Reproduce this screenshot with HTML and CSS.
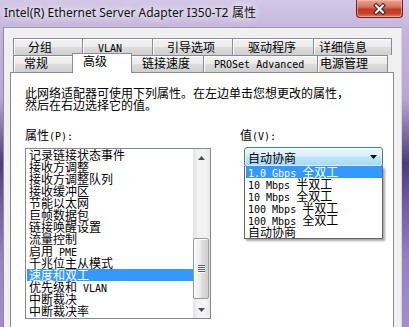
FILE: index.html
```html
<!DOCTYPE html>
<html lang="zh-CN">
<head>
  <meta charset="UTF-8" />
  <title>Intel(R) Ethernet Server Adapter I350-T2 属性</title>
  <link rel="stylesheet" href="styles.css">
</head>
<body>
  <div class="titlebar">
    <span class="title">Intel(R) Ethernet Server Adapter I350-T2 属性</span>
    <span class="close-btn">
      <svg width="15" height="12" viewBox="0 0 15 12">
        <path d="M4 2.5 L11 9.5 M11 2.5 L4 9.5" stroke="#3a2424" stroke-width="4" stroke-linecap="square" fill="none"/>
        <path d="M4 2.5 L11 9.5 M11 2.5 L4 9.5" stroke="#fff" stroke-width="2" stroke-linecap="square" fill="none"/>
      </svg>
    </span>
  </div>

  <div class="dialog">
    <div class="tabs">
      <div class="tab-row row-top">
        <div class="tab">分组</div>
        <div class="tab"><span class="en">VLAN</span></div>
        <div class="tab">引导选项</div>
        <div class="tab">驱动程序</div>
        <div class="tab">详细信息</div>
      </div>
      <div class="tab-row row-bottom">
        <div class="tab">常规</div>
        <div class="tab active">高级</div>
        <div class="tab">链接速度</div>
        <div class="tab"><span class="en">PROSet Advanced</span></div>
        <div class="tab">电源管理</div>
      </div>
    </div>

    <div class="panel">
      <p class="intro">此网络适配器可使用下列属性。在左边单击您想更改的属性，<br>然后在右边选择它的值。</p>

      <div class="fields">
        <div class="prop-col">
          <div class="label">属性<span class="en">(P):</span></div>
          <div class="listbox">
            <ul class="items">
              <li>记录链接状态事件</li>
              <li>接收方调整</li>
              <li>接收方调整队列</li>
              <li>接收缓冲区</li>
              <li>节能以太网</li>
              <li>巨帧数据包</li>
              <li>链接唤醒设置</li>
              <li>流量控制</li>
              <li>启用<span class="en"> PME</span></li>
              <li>千兆位主从模式</li>
              <li class="selected">速度和双工</li>
              <li>优先级和<span class="en"> VLAN</span></li>
              <li>中断裁决</li>
              <li>中断裁决率</li>
            </ul>
            <div class="scrollbar">
              <div class="sb-btn">
                <svg width="7" height="4" viewBox="0 0 7 4"><polygon points="0,4 7,4 3.5,0" fill="#4e4e4e"/></svg>
              </div>
              <div class="sb-track">
                <div class="sb-thumb">
                  <span class="grip"></span>
                  <span class="grip"></span>
                  <span class="grip"></span>
                  <span class="grip"></span>
                </div>
              </div>
              <div class="sb-btn">
                <svg width="7" height="4" viewBox="0 0 7 4"><polygon points="0,0 7,0 3.5,4" fill="#4e4e4e"/></svg>
              </div>
            </div>
          </div>
        </div>

        <div class="value-col">
          <div class="label">值<span class="en">(V):</span></div>
          <div class="combo">
            <span class="combo-text">自动协商</span>
            <svg class="combo-arrow" width="7" height="4" viewBox="0 0 7 4"><polygon points="0,0 7,0 3.5,4" fill="#000"/></svg>
            <ul class="dropdown">
              <li class="selected"><span class="en">1.0 Gbps </span>全双工</li>
              <li><span class="en">10 Mbps </span>半双工</li>
              <li><span class="en">10 Mbps </span>全双工</li>
              <li><span class="en">100 Mbps </span>半双工</li>
              <li><span class="en">100 Mbps </span>全双工</li>
              <li>自动协商</li>
            </ul>
          </div>
        </div>
      </div>
    </div>
  </div>
</body>
</html>
```

FILE: styles.css
```css
* {
  box-sizing: border-box;
}

body {
  margin: 0;
  width: 409px;
  height: 327px;
  overflow: hidden;
  font-family: "Noto Sans CJK SC", sans-serif;
  font-size: 12px;
  line-height: 12px;
  color: #000;
  background: linear-gradient(180deg, #d3c8e6 0%, #c3b4dc 10%, #b8a7d5 30%, #4d3d78 50%, #6f5ca2 62%, #9583c4 80%, #a08fcb 100%);
}

.en {
  font-family: "DejaVu Sans Mono", monospace;
  font-size: 10px;
}

/* Barra de titlu */
.titlebar {
  height: 27px;
  display: flex;
  justify-content: space-between;
  align-items: flex-start;
  padding-left: 4px;
  padding-right: 6px;
}

.title {
  font-family: "Noto Sans", sans-serif;
  font-size: 12px;
  line-height: 14px;
  margin-top: 6px;
  color: #111;
  text-shadow: 0 0 6px #fff, 0 0 10px rgba(255, 255, 255, 0.9);
}

.close-btn {
  width: 47px;
  height: 18px;
  display: flex;
  align-items: center;
  justify-content: center;
  border: 1px solid #5a2a2a;
  border-top: none;
  border-radius: 0 0 4px 4px;
  background: linear-gradient(180deg, #e8a493 0%, #d9745d 40%, #c23a26 55%, #c8432c 80%, #e0805f 100%);
  box-shadow: inset 0 0 0 1px rgba(255, 200, 190, 0.5);
}

/* Dialog */
.dialog {
  margin-left: 3px;
  width: 399px;
  height: 300px;
  overflow: hidden;
  background: #f0f0f0;
  border-left: 1px solid #8e8a98;
  border-top: 1px solid #9b97a6;
  border-right: 1px solid #d8d4e0;
  padding-top: 10px;
}

.tabs {
  padding-left: 9px;
}

.tab-row {
  display: flex;
}

.tab {
  height: 17px;
  border: 1px solid #898c95;
  border-bottom: none;
  border-right: none;
  background: linear-gradient(180deg, #f3f3f3 0%, #ebebeb 50%, #dddddd 51%, #cfcfcf 100%);
  box-shadow: inset 1px 1px 0 #fff;
  white-space: nowrap;
}

.tab:last-child {
  border-right: 1px solid #898c95;
}

.row-top .tab {
  padding-top: 2px;
}

.row-bottom .tab {
  padding-top: 1px;
}

.row-top .tab:nth-child(1) { width: 69px; padding-left: 14px; }
.row-top .tab:nth-child(2) { width: 70px; padding-left: 15px; }
.row-top .tab:nth-child(3) { width: 80px; padding-left: 14px; }
.row-top .tab:nth-child(4) { width: 81px; padding-left: 15px; }
.row-top .tab:nth-child(5) { width: 79px; padding-left: 5px; }

.row-bottom .tab:nth-child(1) { width: 61px; padding-left: 10px; }
.row-bottom .tab:nth-child(2) { width: 60px; padding-left: 10px; }
.row-bottom .tab:nth-child(3) { width: 73px; padding-left: 11px; }
.row-bottom .tab:nth-child(4) { width: 114px; padding-left: 10px; }
.row-bottom .tab:nth-child(5) { width: 71px; padding-left: 2px; }

.tab.active {
  height: 20px;
  margin: -2px -2px -1px -2px;
  width: 64px;
  padding-left: 12px;
  padding-top: 1px;
  background: #fff;
  border-right: 1px solid #898c95;
  box-shadow: none;
  z-index: 1;
}

/* Panou */
.panel {
  margin-left: 6px;
  width: 384px;
  height: 262px;
  background: #fff;
  border: 1px solid #898c95;
  padding: 14px 14px 0 14px;
}

.intro {
  margin: 0;
}

.fields {
  display: flex;
  gap: 29px;
  margin-top: 18px;
}

.label {
  height: 12px;
  white-space: nowrap;
}

.listbox {
  margin-top: 7px;
  width: 186px;
  height: 171px;
  border: 1px solid #828790;
  display: flex;
  padding: 0 0 0 1px;
}

.items {
  list-style: none;
  margin: 0;
  padding: 0;
  width: 167px;
}

.items li {
  height: 12px;
  padding-left: 2px;
  white-space: nowrap;
}

.items li.selected,
.dropdown li.selected {
  background: #3399ff;
  color: #fff;
}

.scrollbar {
  width: 17px;
  display: flex;
  flex-direction: column;
  background: linear-gradient(90deg, #e3e3e3 0%, #f2f2f2 30%, #f4f4f4 70%, #e8e8e8 100%);
}

.sb-btn {
  height: 17px;
  display: flex;
  align-items: center;
  justify-content: center;
}

.sb-track {
  flex: 1;
  padding-top: 72px;
}

.sb-thumb {
  width: 16px;
  height: 61px;
  border: 1px solid #9a9a9a;
  border-radius: 2px;
  background: linear-gradient(90deg, #f6f6f6 0%, #ececec 45%, #dcdcdc 55%, #cfcfcf 100%);
  box-shadow: inset 1px 1px 0 #fff;
  display: flex;
  flex-direction: column;
  align-items: center;
  justify-content: center;
  gap: 1px;
}

.grip {
  width: 7px;
  height: 1px;
  background: #5a5a5a;
  box-shadow: 0 1px 0 #fff;
}

.value-col {
  width: 142px;
}

.combo {
  position: relative;
  margin-top: 6px;
  margin-left: 4px;
  width: 139px;
  height: 20px;
  border: 1px solid #3c7fb1;
  border-radius: 3px;
  background: linear-gradient(180deg, #eaf6fd 0%, #d9f0fc 45%, #bee6fd 50%, #a7d9f5 100%);
  box-shadow: inset 0 0 0 1px rgba(255, 255, 255, 0.6);
  display: flex;
  align-items: center;
  justify-content: space-between;
  padding: 0 5px 0 3px;
}

.combo-text {
  padding-top: 1px;
}

.dropdown {
  position: absolute;
  top: 100%;
  left: -1px;
  width: 139px;
  margin: 0;
  padding: 0 0 0 1px;
  list-style: none;
  background: #fff;
  border: 1px solid #646464;
  border-top: none;
  box-shadow: 2px 2px 2px rgba(0, 0, 0, 0.35);
  z-index: 2;
}

.dropdown li {
  height: 12px;
  width: 136px;
  padding-left: 2px;
  white-space: nowrap;
}
```
